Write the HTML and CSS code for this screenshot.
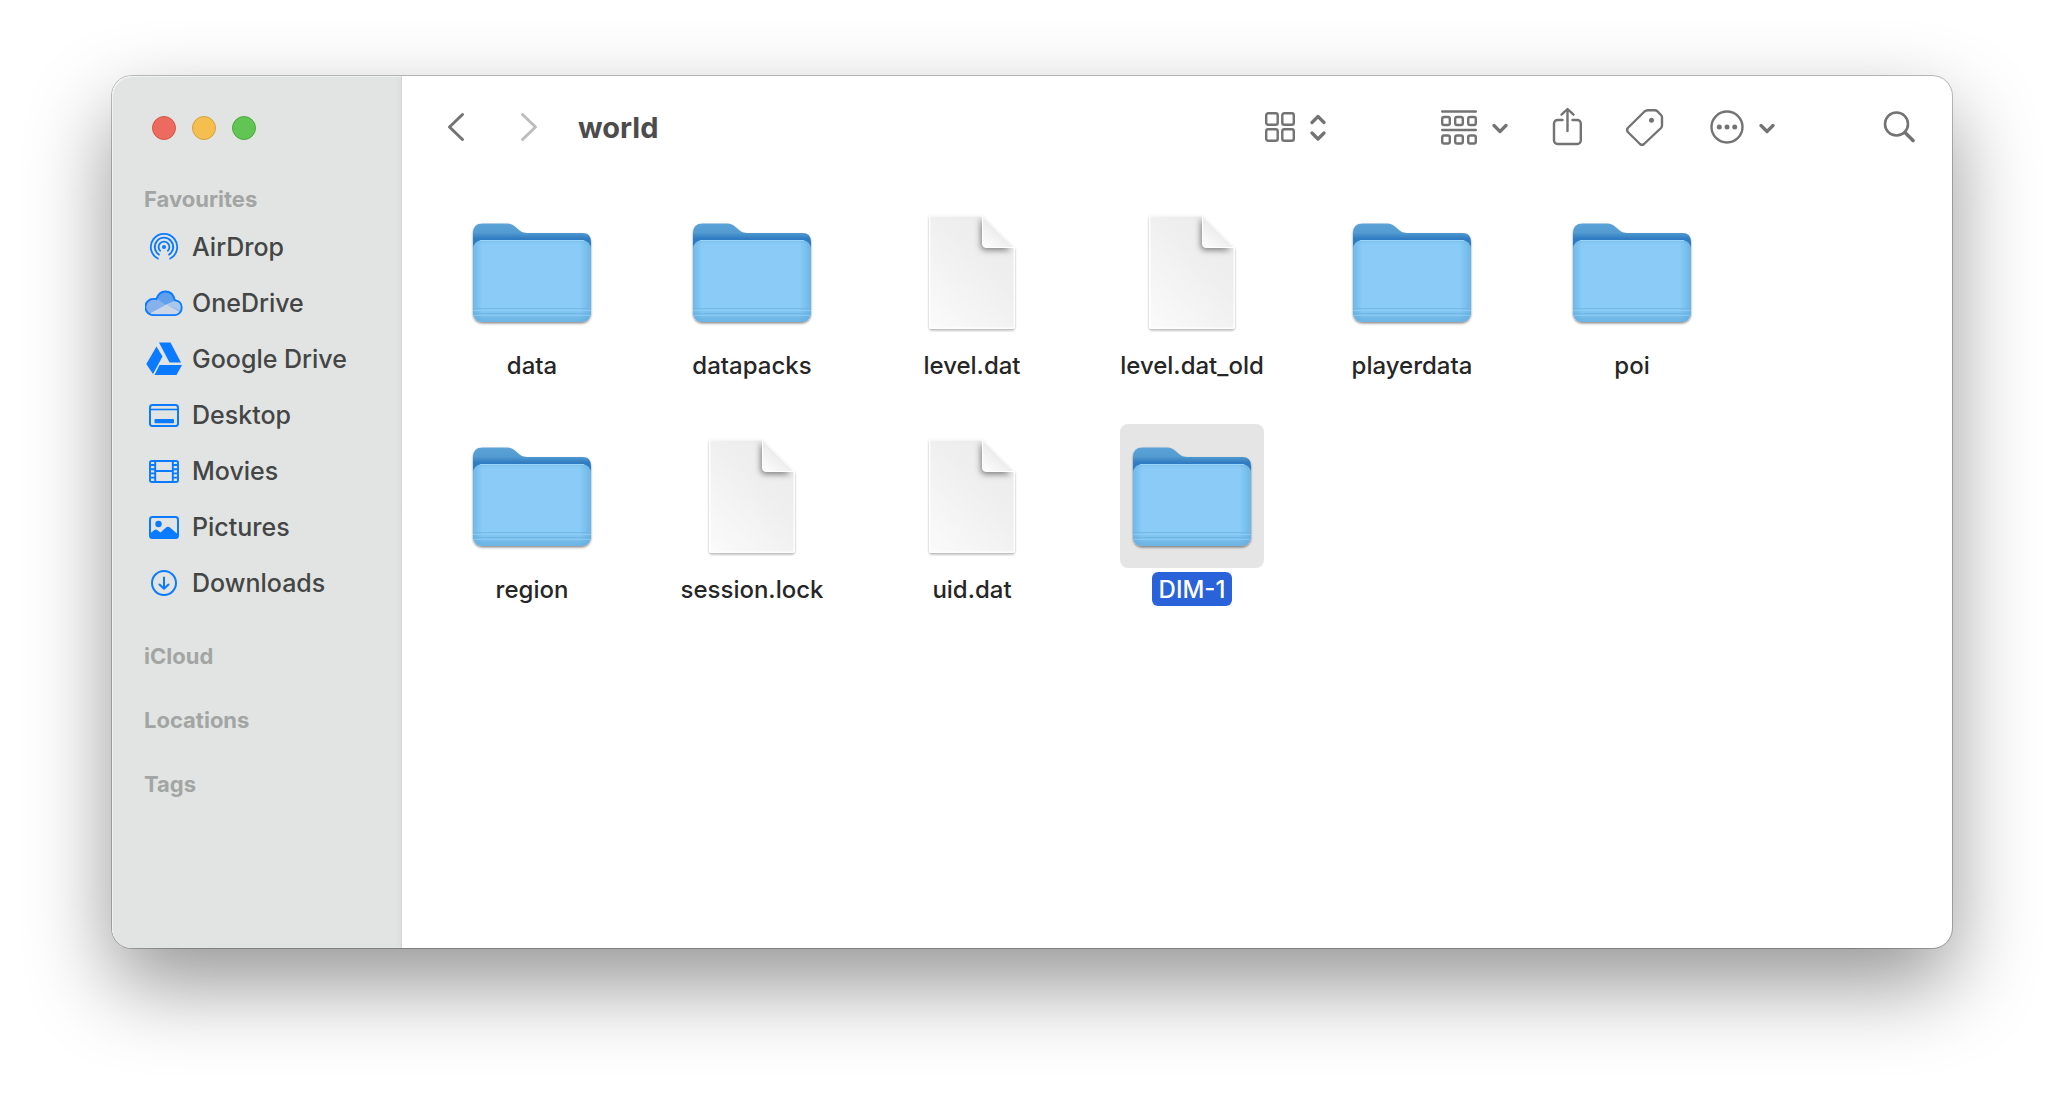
FILE: index.html
```html
<!DOCTYPE html>
<html lang="en-GB">
<head>
<meta charset="utf-8">
<title>world</title>
<meta name="viewport" content="width=device-width, initial-scale=1">
<link rel="stylesheet" href="styles.css">
</head>
<body>
<svg class="defs" width="0" height="0" aria-hidden="true">
  <defs>
    <linearGradient id="folder-back" x1="0" y1="0" x2="0" y2="1">
      <stop offset="0" stop-color="#5ca3d8"/>
      <stop offset="0.1" stop-color="#529bd0"/>
      <stop offset="0.17" stop-color="#2f7bc2"/>
      <stop offset="1" stop-color="#2f7bc2"/>
    </linearGradient>
    <linearGradient id="folder-front" x1="0" y1="0" x2="0" y2="1">
      <stop offset="0" stop-color="#7cc2ef"/>
      <stop offset="0.06" stop-color="#8accf7"/>
      <stop offset="0.83" stop-color="#8accf7"/>
      <stop offset="1" stop-color="#6cb3e3"/>
    </linearGradient>
    <linearGradient id="folder-sides" x1="0" y1="0" x2="1" y2="0">
      <stop offset="0" stop-color="#4f9fd6" stop-opacity="0.45"/>
      <stop offset="0.08" stop-color="#4f9fd6" stop-opacity="0"/>
      <stop offset="0.9" stop-color="#4f9fd6" stop-opacity="0"/>
      <stop offset="1" stop-color="#4f9fd6" stop-opacity="0.5"/>
    </linearGradient>
    <linearGradient id="page" x1="0.1" y1="1" x2="0.9" y2="0">
      <stop offset="0" stop-color="#fafafa"/>
      <stop offset="0.6" stop-color="#efefef"/>
      <stop offset="1" stop-color="#ebebeb"/>
    </linearGradient>
    <linearGradient id="page-fold" x1="0" y1="1" x2="0.5" y2="0.4">
      <stop offset="0" stop-color="#ffffff"/>
      <stop offset="1" stop-color="#eaeaea"/>
    </linearGradient>
    <filter id="soft" x="-40%" y="-40%" width="180%" height="180%"><feGaussianBlur stdDeviation="3"/></filter>
    <filter id="drop" x="-10%" y="-10%" width="120%" height="125%"><feDropShadow dx="0" dy="1.5" stdDeviation="1" flood-color="#000" flood-opacity="0.45"/></filter>
    <filter id="drop-page" x="-10%" y="-10%" width="120%" height="125%"><feDropShadow dx="0" dy="1.5" stdDeviation="1" flood-color="#000" flood-opacity="0.3"/></filter>
    <clipPath id="page-clip"><path d="M24 7H74L107 40V118a3 3 0 0 1-3 3H24a3 3 0 0 1-3-3V10a3 3 0 0 1 3-3z"/></clipPath>
  </defs>
  <symbol id="folder" viewBox="0 0 128 128">
    <g filter="url(#drop)">
      <path fill="url(#folder-back)" d="M5 106V25q0-9.500 9.500-9.500H39c4 0 6 1.500 8.500 3.500C51 22 54 25 59 25H114.500q8.500 0 8.500 9V106z"/>
      <rect x="5" y="32" width="118" height="82" rx="9" fill="url(#folder-front)"/>
    </g>
    <rect x="5" y="32" width="118" height="82" rx="9" fill="url(#folder-sides)"/>
    <path stroke="#9ad5f9" stroke-width="1" fill="none" d="M12 32.500H116"/>
    <path stroke="#6fb5e4" stroke-width="1" stroke-opacity="0.8" fill="none" d="M5 100.500H123M5 105.500H123M7 110.500H121"/>
    <path stroke="#8fccf3" stroke-width="1" stroke-opacity="0.8" fill="none" d="M5 102.500H123M6 107.500H122"/>
  </symbol>
  <symbol id="document" viewBox="0 0 128 128">
    <path filter="url(#drop-page)" fill="url(#page)" d="M24 7H74L107 40V118a3 3 0 0 1-3 3H24a3 3 0 0 1-3-3V10a3 3 0 0 1 3-3z"/>
    <g clip-path="url(#page-clip)">
      <path filter="url(#soft)" fill="#000" fill-opacity="0.5" d="M73 10V38q0 4 4 4H103z"/>
      <path fill="none" stroke="#fff" stroke-opacity="0.8" stroke-width="3" d="M24 7H74L107 40V118a3 3 0 0 1-3 3H24a3 3 0 0 1-3-3V10a3 3 0 0 1 3-3z"/>
    </g>
    <path fill="url(#page-fold)" stroke="#fff" stroke-width="1" d="M74.500 8V36q0 3.500 3.500 3.500H106z"/>
  </symbol>
</svg>

<div class="window">
  <aside class="sidebar">
    <div class="lights">
      <button class="light light-close" aria-label="Close"></button>
      <button class="light light-minimise" aria-label="Minimise"></button>
      <button class="light light-zoom" aria-label="Zoom"></button>
    </div>
    <nav aria-label="Sidebar">
      <h2 class="section section-first">Favourites</h2>
      <ul class="places">
        <li><a class="place" href="#airdrop">
          <svg width="38" height="38" viewBox="0 0 38 38" fill="none" stroke="currentColor" stroke-width="1.8" stroke-linecap="butt">
            <circle cx="19" cy="19" r="2" fill="currentColor" stroke="none"/>
            <path d="M15.700 23.300a5.400 5.400 0 1 1 6.600 0"/>
            <path d="M14.600 27a9.200 9.200 0 1 1 8.800 0"/>
            <path d="M13.500 31a13.200 13.200 0 1 1 11 0" />
          </svg>
          <span>AirDrop</span></a></li>
        <li><a class="place" href="#onedrive">
          <svg width="38" height="38" viewBox="0 0 38 38">
            <path fill="#86b1ec" d="M8.500 31.500a8.300 8.300 0 0 1-.8-17.500c1.600-.2 2.600-.1 3.600.3C13.500 10.500 16.500 7.500 20.500 7.500c4.800 0 8.700 3.300 9.800 8.700 4.200.6 7 3.500 7 7.600 0 4.300-3.200 7.700-7.300 7.700z"/>
            <path fill="#609fec" d="M11.300 14.300C13.500 10.500 16.500 7.500 20.500 7.500c4.800 0 8.700 3.300 9.800 8.700L21 21z"/>
            <path fill="#a9c6ec" d="M21 20.500L28 17.500q6-1.500 9 6L36 27z"/>
            <path fill="#cbd7e8" d="M4 30L21.500 20.500 36 28.500 31 31.500H9z"/>
            <path fill="none" stroke="#0a7aff" stroke-width="1.800" d="M8.800 31.100a8 8 0 0 1-.7-16.200c1.300-.2 2.400 0 3.200.2C13 10.500 16.500 7.500 20.300 7.500c4.800 0 8.400 3.300 9.500 8.700 4.200.6 6.900 3.500 6.900 7.500 0 4.200-3 7.400-6.900 7.400z"/>
          </svg>
          <span>OneDrive</span></a></li>
        <li><a class="place" href="#google-drive">
          <svg width="38" height="38" viewBox="0 0 38 38" fill="currentColor">
            <path d="M14 2.500H25.500L36 22.500H24.500z"/><path d="M11.500 6.500L17.500 16.500 8 34 1.300 24z"/><path d="M14.500 25H37L31.500 35H9.500z"/>
          </svg>
          <span>Google Drive</span></a></li>
        <li><a class="place" href="#desktop">
          <svg width="38" height="38" viewBox="0 0 38 38" fill="none" stroke="currentColor" stroke-width="2">
            <rect x="5" y="9" width="28" height="21" rx="2.500"/><path d="M5 13.500H33" stroke-width="1.600"/><rect x="9.500" y="23" width="19.500" height="4.200" rx="0.800" fill="currentColor" stroke="none"/>
          </svg>
          <span>Desktop</span></a></li>
        <li><a class="place" href="#movies">
          <svg width="38" height="38" viewBox="0 0 38 38" fill="none" stroke="currentColor" stroke-width="1.900">
            <rect x="5" y="9" width="28" height="21" rx="1.800"/><path d="M10.200 9V30M27.800 9V30M10 19H28M5 13H10M5 17.200H10M5 21.400H10M5 25.600H10M28 13H33M28 17.200H33M28 21.400H33M28 25.600H33"/>
          </svg>
          <span>Movies</span></a></li>
        <li><a class="place" href="#pictures">
          <svg width="38" height="38" viewBox="0 0 38 38" fill="none" stroke="currentColor" stroke-width="2">
            <rect x="5" y="9" width="28" height="21" rx="2.500"/><circle cx="13.500" cy="16" r="3.200" fill="currentColor" stroke="none"/><path fill="currentColor" stroke="none" d="M5 25.500L9.500 22q1.500-1 3 .2L15.500 24.500 21 19.500q2-1.700 4 0L33 26.500V29l-1.500 1.500H6.500L5 29z"/>
          </svg>
          <span>Pictures</span></a></li>
        <li><a class="place" href="#downloads">
          <svg width="38" height="38" viewBox="0 0 38 38" fill="none" stroke="currentColor" stroke-width="2" stroke-linecap="round" stroke-linejoin="round">
            <circle cx="19" cy="19" r="12"/><path d="M19 13.500V24.500M14.500 20.500L19 24.800 23.500 20.500"/>
          </svg>
          <span>Downloads</span></a></li>
      </ul>
      <h2 class="section">iCloud</h2>
      <h2 class="section">Locations</h2>
      <h2 class="section">Tags</h2>
    </nav>
  </aside>

  <main class="main">
    <header class="toolbar">
      <div class="history">
        <button class="tool" aria-label="Back">
          <svg width="18" height="30" viewBox="0 0 18 30"><path stroke-width="3" d="M15.500 2.500L2.500 15 15.500 27.500"/></svg>
        </button>
        <button class="tool" aria-label="Forward" disabled>
          <svg width="18" height="30" viewBox="0 0 18 30"><path stroke-width="3" d="M2.500 2.500L15.500 15 2.500 27.500"/></svg>
        </button>
      </div>
      <h1 class="title">world</h1>
      <button class="tool tool-view" aria-label="View as icons">
        <svg width="30" height="30" viewBox="0 0 30 30"><rect x="1.200" y="1.200" width="11.500" height="11.500" rx="2"/><rect x="17.300" y="1.200" width="11.500" height="11.500" rx="2"/><rect x="1.200" y="17.300" width="11.500" height="11.500" rx="2"/><rect x="17.300" y="17.300" width="11.500" height="11.500" rx="2"/></svg>
        <svg width="16" height="30" viewBox="0 0 16 30"><path stroke-width="3.200" d="M2 10.500L8 4.500 14 10.500M2 21L8 27 14 21"/></svg>
      </button>
      <div class="tools">
        <button class="tool" aria-label="Group items">
          <svg width="36" height="38" viewBox="0 0 36 38"><path d="M1.200 3.500H34.800M1.200 22H34.800"/><rect x="1.200" y="9" width="7.600" height="8" rx="1.800"/><rect x="14.200" y="9" width="7.600" height="8" rx="1.800"/><rect x="27.200" y="9" width="7.600" height="8" rx="1.800"/><rect x="1.200" y="27.500" width="7.600" height="8" rx="1.800"/><rect x="14.200" y="27.500" width="7.600" height="8" rx="1.800"/><rect x="27.200" y="27.500" width="7.600" height="8" rx="1.800"/></svg>
          <svg width="16" height="30" viewBox="0 0 16 30"><path stroke-width="3.200" d="M2 13.500L8 19.500 14 13.500"/></svg>
        </button>
        <button class="tool" aria-label="Share">
          <svg width="30" height="42" viewBox="0 0 30 42"><path d="M10.500 14H5.500a3.500 3.500 0 0 0-3.500 3.500V34.500a3.500 3.500 0 0 0 3.500 3.500h19.800a3.500 3.500 0 0 0 3.500-3.500V17.500a3.500 3.500 0 0 0-3.500-3.500H20.500M15.500 25V4M9.500 8.700L15.500 3 21.500 8.700"/></svg>
        </button>
        <button class="tool" aria-label="Edit tags">
          <svg width="40" height="42" viewBox="0 0 40 42"><path d="M18.500 5.500Q20 4.200 22 4.200H29q1.200 0 2.200 1L35 9q1 1 1 2.500V19.500q0 1.500-1 2.500L18 38q-2 1.700-4 0L1.800 26q-1.400-2 0-4z"/><circle cx="25.500" cy="14.200" r="2.500" fill="currentColor" stroke="none"/></svg>
        </button>
        <button class="tool" aria-label="More actions">
          <svg width="34" height="34" viewBox="0 0 34 34"><circle cx="17" cy="17" r="15.500"/><g fill="currentColor" stroke="none"><circle cx="9.300" cy="17" r="2.500"/><circle cx="17" cy="17" r="2.500"/><circle cx="24.700" cy="17" r="2.500"/></g></svg>
          <svg width="16" height="30" viewBox="0 0 16 30"><path stroke-width="3.200" d="M2 13.500L8 19.500 14 13.500"/></svg>
        </button>
      </div>
      <button class="tool tool-search" aria-label="Search">
        <svg width="32" height="32" viewBox="0 0 32 32"><circle cx="13.500" cy="13" r="11.500" stroke-width="2.600"/><path stroke-width="3.600" d="M22 21.500L30 29.500"/></svg>
      </button>
    </header>

    <ul class="files">
      <li><button class="file"><svg class="file-icon"><use href="#folder"/></svg><span class="file-name">data</span></button></li>
      <li><button class="file"><svg class="file-icon"><use href="#folder"/></svg><span class="file-name">datapacks</span></button></li>
      <li><button class="file"><svg class="file-icon"><use href="#document"/></svg><span class="file-name">level.dat</span></button></li>
      <li><button class="file"><svg class="file-icon"><use href="#document"/></svg><span class="file-name">level.dat_old</span></button></li>
      <li><button class="file"><svg class="file-icon"><use href="#folder"/></svg><span class="file-name">playerdata</span></button></li>
      <li><button class="file"><svg class="file-icon"><use href="#folder"/></svg><span class="file-name">poi</span></button></li>
      <li><button class="file"><svg class="file-icon"><use href="#folder"/></svg><span class="file-name">region</span></button></li>
      <li><button class="file"><svg class="file-icon"><use href="#document"/></svg><span class="file-name">session.lock</span></button></li>
      <li><button class="file"><svg class="file-icon"><use href="#document"/></svg><span class="file-name">uid.dat</span></button></li>
      <li><button class="file file-selected" aria-pressed="true"><svg class="file-icon"><use href="#folder"/></svg><span class="file-name">DIM-1</span></button></li>
    </ul>
  </main>
</div>
</body>
</html>
```
FILE: styles.css
```css
* {
  box-sizing: border-box;
}

body {
  margin: 0;
  min-height: 100vh;
  display: flex;
  padding: 76px 112px 148px;
  background: #fff;
  font-family: Inter, "Liberation Sans", sans-serif;
}

button {
  font: inherit;
  color: inherit;
  border: 0;
  padding: 0;
  background: none;
}

ul {
  list-style: none;
  margin: 0;
  padding: 0;
}

.defs {
  position: absolute;
}

.window {
  flex: 1;
  display: flex;
  border-radius: 20px;
  background: #fff;
  box-shadow: 0 0 0 1px rgba(0, 0, 0, 0.24), 0 36px 84px rgba(0, 0, 0, 0.42);
}

/* Sidebar */

.sidebar {
  flex: 0 0 290px;
  border-radius: 20px 0 0 20px;
  border-right: 1px solid #d5d7d6;
  background: linear-gradient(to left, #dcdfdd, #e1e4e2 6px);
  box-shadow: inset 1px 1px 0 rgba(255, 255, 255, 0.5);
}

.lights {
  display: flex;
  align-items: center;
  gap: 16px;
  height: 104px;
  padding-left: 40px;
}

.light {
  width: 24px;
  height: 24px;
  border-radius: 50%;
  border: 1px solid;
}

.light-close {
  background: #ec6a5e;
  border-color: #d5554a;
}

.light-minimise {
  background: #f5bf4f;
  border-color: #d8a03c;
}

.light-zoom {
  background: #61c554;
  border-color: #4caa3d;
}

.section {
  margin: 0;
  padding-left: 32px;
  font-size: 22px;
  font-weight: 650;
  line-height: 64px;
  color: #a3a5a4;
}

.section-first {
  line-height: 39px;
}

.places {
  margin-bottom: 13px;
}

.place {
  display: flex;
  align-items: center;
  gap: 9px;
  height: 56px;
  padding-left: 33px;
  font-size: 25px;
  font-weight: 450;
  color: #444645;
  text-decoration: none;
}

.place svg {
  color: #0a7aff;
}

/* Toolbar */

.main {
  flex: 1;
  min-width: 0;
}

.toolbar {
  display: flex;
  align-items: center;
  height: 104px;
  padding: 0 37px 2px 45px;
  color: #737373;
}

.history {
  display: flex;
  gap: 55px;
}

.title {
  margin: 0 0 0 40px;
  font-size: 29px;
  font-weight: 650;
  color: #4c4c4c;
}

.tool {
  display: flex;
  align-items: center;
  gap: 15px;
}

.tool:disabled {
  color: #bdbdbd;
}

.tool svg {
  fill: none;
  stroke: currentColor;
  stroke-width: 2.4;
  stroke-linecap: round;
  stroke-linejoin: round;
}

.tool-view {
  margin-left: auto;
}

.tools {
  display: flex;
  align-items: center;
  gap: 44px;
  margin: 0 108px 0 115px;
}

/* Files */

.files {
  display: grid;
  grid-template-columns: repeat(auto-fill, 220px);
  row-gap: 42px;
  padding: 20px 0 20px 20px;
}

.file {
  display: flex;
  flex-direction: column;
  align-items: center;
  gap: 4px;
  width: 100%;
}

.file-icon {
  width: 144px;
  height: 144px;
  padding: 8px;
  border-radius: 8px;
}

.file-name {
  padding: 2px 7px 0;
  border-radius: 6px;
  font-size: 24px;
  font-weight: 450;
  line-height: 32px;
  color: #262626;
}

.file-selected .file-icon {
  background: #e5e5e5;
}

.file-selected .file-name {
  background: #2962d9;
  color: #fff;
}
```
